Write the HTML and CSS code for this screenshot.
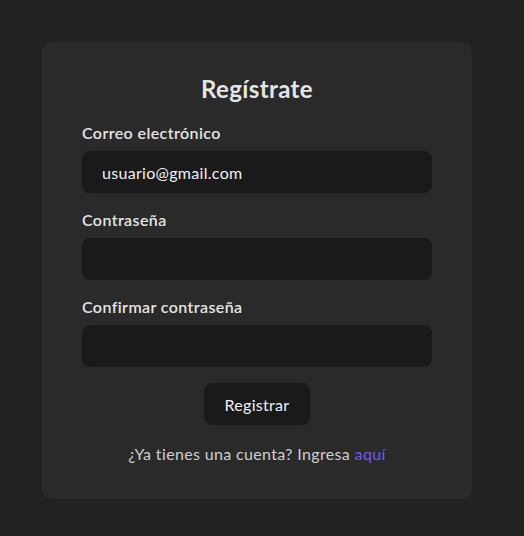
FILE: index.html
```html
<!DOCTYPE html>
<html lang="es">
<head>
<meta charset="utf-8">
<link rel="stylesheet" href="styles.css">
</head>
<body>
<main class="page">
  <form class="card">
    <h1 class="title">Regístrate</h1>
    <div class="field">
      <label class="label">Correo electrónico</label>
      <div class="input">usuario@gmail.com</div>
    </div>
    <div class="field">
      <label class="label">Contraseña</label>
      <div class="input"></div>
    </div>
    <div class="field">
      <label class="label">Confirmar contraseña</label>
      <div class="input"></div>
    </div>
    <div class="actions">
      <button type="button" class="btn">Registrar</button>
    </div>
    <p class="footer">¿Ya tienes una cuenta? Ingresa <a class="link">aquí</a></p>
  </form>
</main>
</body>
</html>
```
FILE: styles.css
```css
html, body {
  margin: 0;
  padding: 0;
  background: #222222;
  height: 100%;
}
body {
  font-family: Lato, "Noto Sans", sans-serif;
  color: #e6e6e6;
}
.page {
  padding: 42px 0 0 42px;
}
.card {
  width: 350px;
  background: #2a2a2a;
  border-radius: 10px;
  padding: 32px 40px 35px;
  display: flex;
  flex-direction: column;
}
.title {
  margin: 0 0 19px;
  text-align: center;
  font-size: 24px;
  line-height: 30px;
  font-weight: 700;
  color: #e4e4e4;
  letter-spacing: 0.4px;
}
.field {
  display: flex;
  flex-direction: column;
  gap: 8px;
  margin-bottom: 17px;
}
.field:nth-of-type(3) {
  margin-bottom: 16px;
}
.label {
  font-size: 16px;
  line-height: 20px;
  font-weight: 600;
  color: #e4e4e4;
  letter-spacing: 0.4px;
}
.input {
  height: 42px;
  box-sizing: border-box;
  background: #1a1a1a;
  border-radius: 8px;
  padding: 0 20px;
  display: flex;
  align-items: center;
  font-size: 16px;
  color: #f0f0f0;
  letter-spacing: 0.3px;
}
.actions {
  display: flex;
  justify-content: center;
}
.btn {
  height: 42px;
  width: 106px;
  background: #1a1a1a;
  color: #f0f0f0;
  border: none;
  border-radius: 8px;
  font-family: inherit;
  font-size: 16px;
  letter-spacing: 0.3px;
}
.footer {
  margin: 19px 0 0;
  text-align: center;
  font-size: 16px;
  line-height: 20px;
  color: #cfcfcf;
  letter-spacing: 0.35px;
}
.link {
  color: #6a5cf0;
}
```
